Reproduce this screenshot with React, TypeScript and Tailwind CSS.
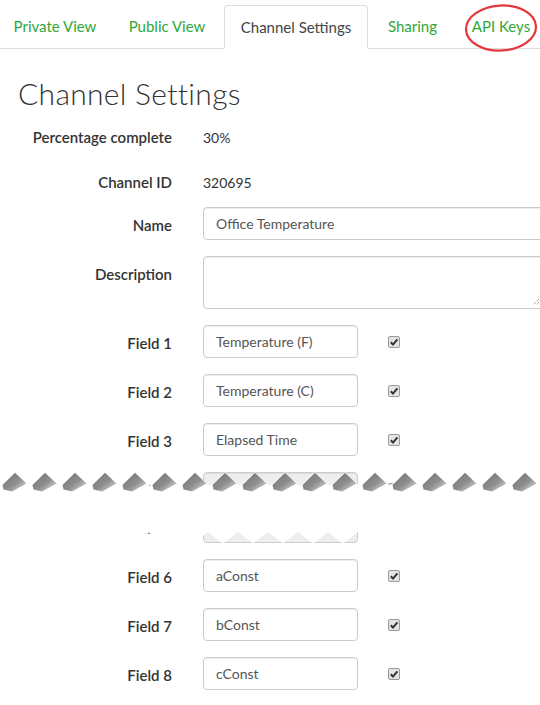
import React from "react";

const tabs = [
  { label: "Private View", w: "w-[110px]" },
  { label: "Public View", w: "w-[110px]" },
  { label: "Channel Settings", w: "w-[144px]", active: true },
  { label: "Sharing", w: "w-[85px]" },
  { label: "API Keys", w: "w-[88px]" },
];

function Check() {
  return (
    <span className="flex h-[12px] w-[12px] items-center justify-center rounded-[2px] border border-[#9a9a9a] bg-[#e4e4e4]">
      <svg width="10" height="10" viewBox="0 0 10 10">
        <polyline points="1.8,5.2 4,7.6 8.4,2.4" fill="none" stroke="#333" strokeWidth="2" />
      </svg>
    </span>
  );
}

function FieldRow({ n, value, muted }: { n: number; value: string; muted?: boolean }) {
  return (
    <div className="flex h-[33px] items-center">
      <div className="w-[172px] shrink-0 pt-[4px] text-right text-[15px] font-semibold text-[#333]">Field {n}</div>
      <div
        className={`ml-[31px] flex h-[33px] w-[155px] shrink-0 items-center rounded-[4px] border border-[#ccc] px-[12px] text-[14px] text-[#555] shadow-[inset_0_1px_1px_rgba(0,0,0,0.075)] ${
          muted ? "bg-[#eee]" : "bg-white"
        }`}
      >
        {value}
      </div>
      <div className="ml-[30px] shrink-0">
        <Check />
      </div>
    </div>
  );
}

// torn-paper edge drawn over the hidden rows
function Tear() {
  const top: string[] = [];
  const bottom: string[] = [];
  for (let x = -30; x <= 570; x += 15) {
    const i = Math.round(x / 15);
    top.push(`${x},${i % 2 === 0 ? 14 : 0}`);
  }
  for (let x = -32; x <= 570; x += 15) {
    const i = Math.round((x + 2) / 15);
    bottom.unshift(`${x},${i % 2 === 0 ? 60 : 71.5}`);
  }
  const roofs: number[] = [];
  for (let px = 15; px < 560; px += 30) roofs.push(px);
  return (
    <svg className="pointer-events-none absolute left-0 top-0 overflow-visible" width="540" height="76" viewBox="0 0 540 76">
      <defs>
        <linearGradient id="roof" x1="0" y1="0" x2="1" y2="1">
          <stop offset="0" stopColor="#727272" />
          <stop offset="0.55" stopColor="#8e8e8e" />
          <stop offset="1" stopColor="#e6e6e6" />
        </linearGradient>
        <filter id="soft" x="-20%" y="-20%" width="140%" height="160%">
          <feGaussianBlur stdDeviation="0.6" />
        </filter>
      </defs>
      <polygon points={[...top, ...bottom].join(" ")} fill="#fff" />
      {roofs.map((px) => (
        <polygon
          key={px}
          points={`${px},0.8 ${px - 12.5},13 ${px - 11.5},17.5 ${px - 3},19.5 ${px + 11.5},11.5`}
          fill="url(#roof)"
          filter="url(#soft)"
        />
      ))}
    </svg>
  );
}

export default function App() {
  return (
    <div className="relative h-[705px] w-[540px] overflow-hidden bg-white font-['Lato','Liberation_Sans',sans-serif] text-[#333]">
      {/* tabs */}
      <nav className="flex h-[49px] border-b border-[#ddd] pt-[5px]">
        {tabs.map((t) => (
          <div
            key={t.label}
            className={`${t.w} mr-[2px] flex shrink-0 items-center justify-center text-[15px] ${
              t.active
                ? "-mb-px rounded-t-[4px] border border-[#ddd] border-b-white bg-white text-[#444]"
                : "text-[#2fa83a]"
            }`}
          >
            {t.label}
          </div>
        ))}
      </nav>

      {/* annotation round the API Keys tab */}
      <svg className="pointer-events-none absolute left-[462px] top-[2px]" width="78" height="52" viewBox="0 0 78 52">
        <ellipse cx="39" cy="26" rx="35" ry="22.5" fill="none" stroke="#e2383d" strokeWidth="2.2" transform="rotate(-3 39 26)" />
      </svg>

      <h1 className="ml-[18px] mt-[22px] h-[44px] text-[30px] font-light leading-[44px] tracking-[0.3px] text-[#333]">
        Channel Settings
      </h1>

      <div className="mt-[6px] flex flex-col">
        <div className="flex h-[33px] items-center">
          <div className="w-[172px] shrink-0 text-right text-[15px] font-semibold">Percentage complete</div>
          <div className="ml-[31px] text-[14px]">30%</div>
        </div>
        <div className="mt-[12px] flex h-[33px] items-center">
          <div className="w-[172px] shrink-0 text-right text-[15px] font-semibold">Channel ID</div>
          <div className="ml-[31px] text-[14px]">320695</div>
        </div>
        <div className="mt-[8px] flex h-[33px] items-center">
          <div className="w-[172px] shrink-0 pt-[4px] text-right text-[15px] font-semibold">Name</div>
          <div className="ml-[31px] flex h-[33px] w-[360px] shrink-0 items-center rounded-[4px] border border-[#ccc] px-[12px] text-[14px] text-[#555] shadow-[inset_0_1px_1px_rgba(0,0,0,0.075)]">
            Office Temperature
          </div>
        </div>
        <div className="mt-[16px] flex h-[53px]">
          <div className="w-[172px] shrink-0 pt-[8px] text-right text-[15px] font-semibold leading-[20px]">Description</div>
          <div className="relative ml-[31px] h-[53px] w-[342px] shrink-0 rounded-[4px] border border-[#ccc] shadow-[inset_0_1px_1px_rgba(0,0,0,0.075)]">
            <svg className="absolute bottom-[2px] left-[328px]" width="8" height="8" viewBox="0 0 8 8">
              <path d="M7 1 L1 7 M7 4 L4 7" stroke="#888" strokeWidth="1" strokeDasharray="1 1" />
            </svg>
          </div>
        </div>
        <div className="mt-[16px]">
          <FieldRow n={1} value="Temperature (F)" />
        </div>
        <div className="mt-[16px]">
          <FieldRow n={2} value="Temperature (C)" />
        </div>
        <div className="mt-[16px]">
          <FieldRow n={3} value="Elapsed Time" />
        </div>

        <div className="relative mt-[16px] flex h-[71px] flex-col justify-between">
          <FieldRow n={4} value="" muted />
          <FieldRow n={5} value="" muted />
          <Tear />
        </div>

        <div className="mt-[16px]">
          <FieldRow n={6} value="aConst" />
        </div>
        <div className="mt-[16px]">
          <FieldRow n={7} value="bConst" />
        </div>
        <div className="mt-[16px]">
          <FieldRow n={8} value="cConst" />
        </div>
      </div>
    </div>
  );
}
